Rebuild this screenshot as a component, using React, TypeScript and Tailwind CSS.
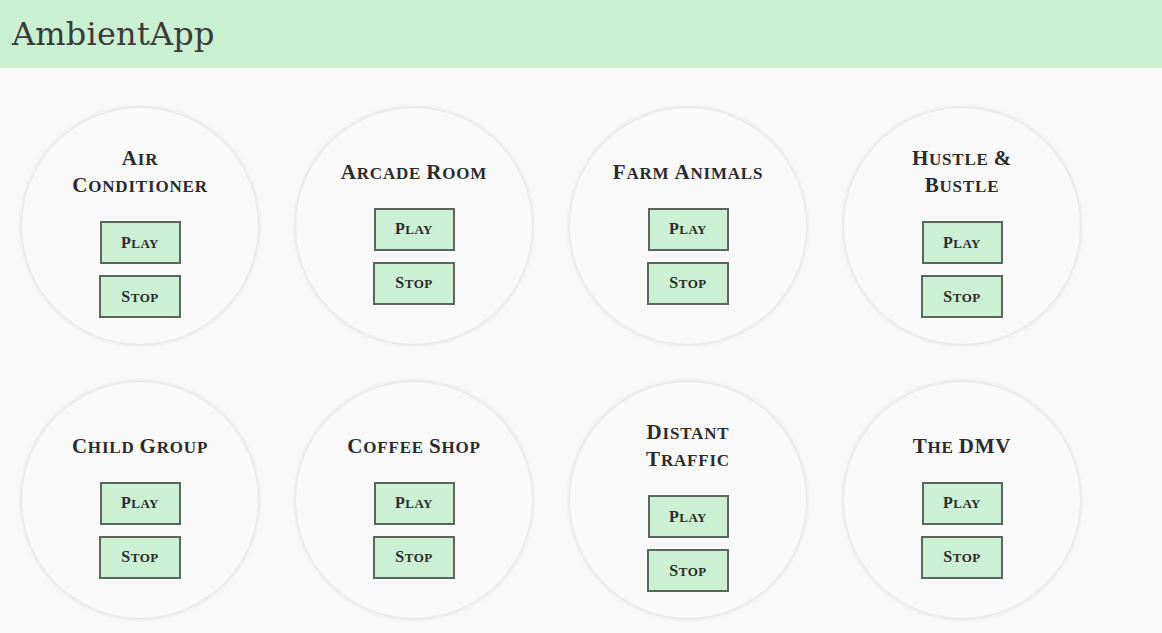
const sounds = [
  ['Air', 'Conditioner'],
  ['Arcade Room'],
  ['Farm Animals'],
  ['Hustle &', 'Bustle'],
  ['Child Group'],
  ['Coffee Shop'],
  ['Distant', 'Traffic'],
  ['The DMV'],
];

// fake the Cinzel look: capitals big, lowercase as smaller caps
function Caps({ text, big, small }: { text: string; big: string; small: string }) {
  const runs: { s: string; up: boolean }[] = [];
  for (const ch of text) {
    const up = ch !== ch.toLowerCase() || ch === '&';
    const last = runs[runs.length - 1];
    if (last && last.up === up) last.s += ch;
    else runs.push({ s: ch, up });
  }
  return (
    <>
      {runs.map((r, i) => (
        <span key={i} className={r.up ? big : small}>
          {r.up ? r.s : r.s.toUpperCase()}
        </span>
      ))}
    </>
  );
}

function SoundCard({ lines }: { lines: string[] }) {
  return (
    <div className="w-[236px] h-[236px] rounded-full bg-[#f9f9f9] shadow-[0_0_5px_rgba(0,0,0,0.16)] flex flex-col items-center justify-center pt-[11px]">
      <h3 className="text-center font-bold text-[#2b2b2b] tracking-[0.8px] mb-[22px]">
        {lines.map((l) => (
          <div key={l} className="h-[27px] leading-[27px]">
            <Caps text={l} big="text-[21px]" small="text-[17px]" />
          </div>
        ))}
      </h3>
      <div className="flex flex-col items-center gap-[11px]">
        <button className="w-[81px] h-[43px] bg-[#cbf0d3] border-2 border-[#5d655f] font-bold text-[#2b2b2b] tracking-[0.5px]">
          <Caps text="Play" big="text-[16px]" small="text-[13px]" />
        </button>
        <button className="w-[82px] h-[43px] bg-[#cbf0d3] border-2 border-[#5d655f] font-bold text-[#2b2b2b] tracking-[0.5px]">
          <Caps text="Stop" big="text-[16px]" small="text-[13px]" />
        </button>
      </div>
    </div>
  );
}

export default function App() {
  return (
    <div className="min-h-[633px] bg-[#f8f8f8]" style={{ fontFamily: '"Liberation Serif", serif' }}>
      <header className="h-[68px] bg-[#c9f0d1] flex items-center px-[12px]">
        <h1 className="text-[32px] text-[#3b3b3b] tracking-[0.2px]" style={{ fontFamily: '"DejaVu Serif", serif' }}>
          AmbientApp
        </h1>
      </header>
      <main className="pt-[40px] pl-[22px] grid grid-cols-[repeat(4,236px)] gap-[38px]">
        {sounds.map((s) => (
          <SoundCard key={s.join(' ')} lines={s} />
        ))}
      </main>
    </div>
  );
}
